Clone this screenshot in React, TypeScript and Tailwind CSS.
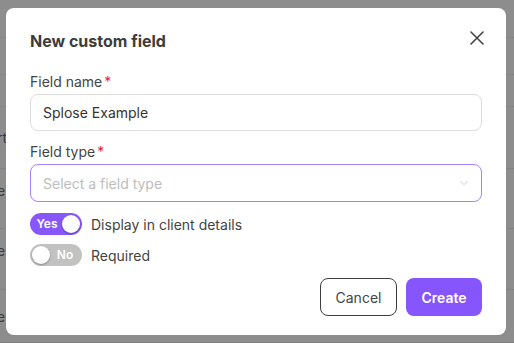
import { ChevronDown } from "lucide-react";

function Toggle({ on, label }: { on: boolean; label: string }) {
  return (
    <div className="flex items-center gap-[9px]">
      <div
        className={`w-[52px] h-[22px] rounded-full p-[2px] flex items-center ${
          on ? "bg-[#8757fc] flex-row" : "bg-[#c2c2c2] flex-row-reverse"
        }`}
      >
        <span className="flex-1 text-center text-[12px] font-semibold text-white leading-4">
          {on ? "Yes" : "No"}
        </span>
        <span className="w-[18px] h-[18px] rounded-full bg-white shadow-[0_1px_2px_rgba(0,0,0,0.3)]" />
      </div>
      <span className="text-[14px] text-[#444]">{label}</span>
    </div>
  );
}

export default function App() {
  // rows of the page that sits behind the overlay
  const rows = [
    { h: "h-[38px]", t: "" },
    { h: "h-[37px]", t: "" },
    { h: "h-[32px]", t: "" },
    { h: "h-[62px]", t: "rt" },
    { h: "h-[60px] pb-[16px]", t: "e" },
    { h: "h-[61px] pb-[18px]", t: "e" },
    { h: "flex-1", t: "e" },
  ];

  return (
    <main
      className="relative w-[514px] h-[343px] bg-[#8d8d8e] overflow-hidden flex flex-col"
      style={{ fontFamily: "Inter, 'Noto Sans', sans-serif" }}
    >
      {rows.map((r, i) => (
        <div
          key={i}
          className={`${r.h} shrink-0 border-b border-[#828283] flex items-center text-[14px] text-[#3c3c3c]`}
        >
          <span className="ml-[-3px]">{r.t}</span>
        </div>
      ))}

      {/* dialog */}
      <div className="absolute left-[6px] top-[8px] w-[500px] h-[327px] bg-white rounded-[8px] px-[24px] pt-[21px] flex flex-col">
        <div className="flex items-center justify-between h-[24px]">
          <h1 className="text-[16px] font-bold text-[#3c3c3c]">New custom field</h1>
          <svg
            width="14"
            height="14"
            viewBox="0 0 14 14"
            className="mr-[-2px] mt-[-6px]"
            fill="none"
            stroke="#444"
            strokeWidth="1.6"
            strokeLinecap="round"
          >
            <path d="M1 1L13 13M13 1L1 13" />
          </svg>
        </div>

        <div className="mt-[19px] flex flex-col gap-[2px]">
          <label className="text-[14px] text-[#444] leading-[20px]">
            Field name<span className="text-[#e11d48] ml-[2px]">*</span>
          </label>
          <div className="h-[37px] rounded-[8px] border border-[#dcdcdc] flex items-center px-[12px] text-[14px] text-[#333]">
            Splose Example
          </div>
        </div>

        <div className="mt-[11px] flex flex-col gap-[2px]">
          <label className="text-[14px] text-[#444] leading-[20px]">
            Field type<span className="text-[#e11d48] ml-[2px]">*</span>
          </label>
          <div className="h-[38px] rounded-[8px] border border-[#a583f8] flex items-center justify-between pl-[12px] pr-[10px] text-[14px] text-[#bdbdbd]">
            Select a field type
            <ChevronDown className="w-[14px] h-[14px] text-[#c4c4c4]" strokeWidth={1.5} />
          </div>
        </div>

        <div className="mt-[11px] flex flex-col gap-[9px]">
          <Toggle on label="Display in client details" />
          <Toggle on={false} label="Required" />
        </div>

        <div className="mt-[12px] flex justify-end gap-[9px]">
          <button className="w-[77px] h-[38px] rounded-[8px] border border-[#3e3e3e] text-[14px] text-[#444]">
            Cancel
          </button>
          <button className="w-[76px] h-[38px] rounded-[8px] bg-[#8755fc] text-[14px] font-semibold text-white">
            Create
          </button>
        </div>
      </div>
    </main>
  );
}
